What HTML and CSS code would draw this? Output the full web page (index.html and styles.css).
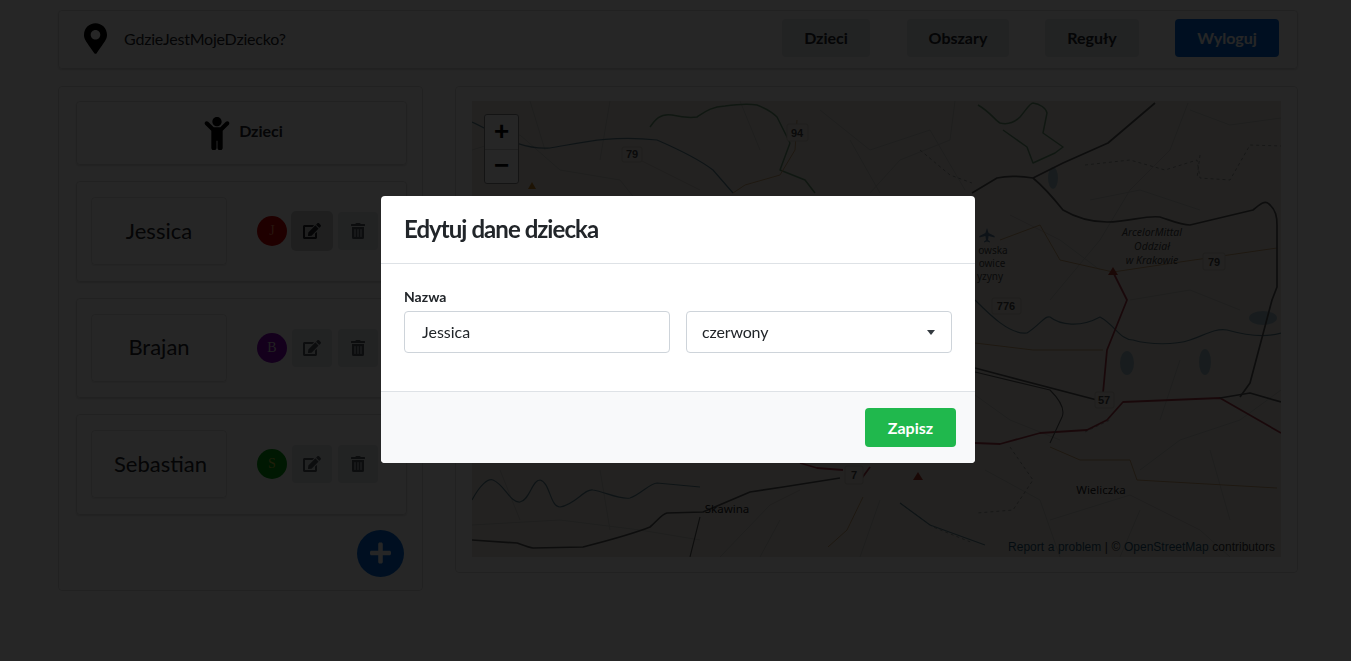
FILE: index.html
```html
<!DOCTYPE html>
<html lang="pl">
<head>
<meta charset="utf-8">
<title>GdzieJestMojeDziecko?</title>
<link rel="stylesheet" href="styles.css">
</head>
<body>
<div class="page">
  <header class="topbar">
    <div class="brand">
      <svg class="pin" viewBox="0 0 384 512"><path d="M172.268 501.67C26.97 291.031 0 268.413 0 192 0 85.961 85.961 0 192 0s192 85.961 192 192c0 76.413-26.97 99.031-172.268 309.67-9.535 13.774-29.93 13.773-39.464 0zM192 272c44.183 0 80-35.817 80-80s-35.817-80-80-80-80 35.817-80 80 35.817 80 80 80z"/></svg>
      <span class="brand-name">GdzieJestMojeDziecko?</span>
    </div>
    <nav class="nav">
      <a class="nav-btn nav-dzieci">Dzieci</a>
      <a class="nav-btn nav-obszary">Obszary</a>
      <a class="nav-btn nav-reguly">Reguły</a>
      <a class="nav-btn nav-primary">Wyloguj</a>
    </nav>
  </header>

  <main class="columns">
    <section class="panel">
      <div class="panel-title">
        <svg class="child" viewBox="0 0 384 512"><path d="M120 72c0-39.765 32.235-72 72-72s72 32.235 72 72c0 39.764-32.235 72-72 72s-72-32.236-72-72zm254.627 1.373c-12.496-12.497-32.758-12.497-45.254 0L242.745 160H141.254L54.627 73.373c-12.496-12.497-32.758-12.497-45.254 0-12.497 12.497-12.497 32.758 0 45.255L104 213.254V480c0 17.673 14.327 32 32 32h16c17.673 0 32-14.327 32-32V368h16v112c0 17.673 14.327 32 32 32h16c17.673 0 32-14.327 32-32V213.254l94.627-94.627c12.497-12.497 12.497-32.757 0-45.254z"/></svg>
        <span>Dzieci</span>
      </div>

      <article class="kid">
        <div class="kid-name">Jessica</div>
        <span class="avatar avatar-red">J</span>
        <button class="icon-btn icon-btn-focus"><svg class="ic-edit" viewBox="0 0 576 512"><path d="M402.6 83.2l90.2 90.2c3.8 3.8 3.8 10 0 13.8L274.4 405.6l-92.8 10.3c-12.4 1.4-22.9-9.1-21.5-21.5l10.3-92.8L388.8 83.2c3.8-3.8 10-3.8 13.8 0zm162-22.9l-48.8-48.8c-15.2-15.2-39.9-15.2-55.2 0l-35.4 35.4c-3.8 3.8-3.8 10 0 13.8l90.2 90.2c3.8 3.8 10 3.8 13.8 0l35.4-35.4c15.2-15.3 15.2-40 0-55.2zM384 346.2V448H64V128h229.8c3.2 0 6.2-1.3 8.5-3.5l40-40c7.6-7.6 2.2-20.5-8.5-20.5H48C21.5 64 0 85.5 0 112v352c0 26.5 21.5 48 48 48h352c26.5 0 48-21.5 48-48V306.2c0-10.7-12.9-16-20.5-8.5l-40 40c-2.2 2.3-3.5 5.3-3.5 8.5z"/></svg></button>
        <button class="icon-btn"><svg class="ic-trash" viewBox="0 0 448 512"><path d="M32 464a48 48 0 0 0 48 48h288a48 48 0 0 0 48-48V128H32zm272-256a16 16 0 0 1 32 0v224a16 16 0 0 1-32 0zm-96 0a16 16 0 0 1 32 0v224a16 16 0 0 1-32 0zm-96 0a16 16 0 0 1 32 0v224a16 16 0 0 1-32 0zM432 32H312l-9.4-18.7A24 24 0 0 0 281.1 0H166.8a23.72 23.72 0 0 0-21.4 13.3L136 32H16A16 16 0 0 0 0 48v32a16 16 0 0 0 16 16h416a16 16 0 0 0 16-16V48a16 16 0 0 0-16-16z"/></svg></button>
      </article>

      <article class="kid">
        <div class="kid-name">Brajan</div>
        <span class="avatar avatar-purple">B</span>
        <button class="icon-btn"><svg class="ic-edit" viewBox="0 0 576 512"><path d="M402.6 83.2l90.2 90.2c3.8 3.8 3.8 10 0 13.8L274.4 405.6l-92.8 10.3c-12.4 1.4-22.9-9.1-21.5-21.5l10.3-92.8L388.8 83.2c3.8-3.8 10-3.8 13.8 0zm162-22.9l-48.8-48.8c-15.2-15.2-39.9-15.2-55.2 0l-35.4 35.4c-3.8 3.8-3.8 10 0 13.8l90.2 90.2c3.8 3.8 10 3.8 13.8 0l35.4-35.4c15.2-15.3 15.2-40 0-55.2zM384 346.2V448H64V128h229.8c3.2 0 6.2-1.3 8.5-3.5l40-40c7.6-7.6 2.2-20.5-8.5-20.5H48C21.5 64 0 85.5 0 112v352c0 26.5 21.5 48 48 48h352c26.5 0 48-21.5 48-48V306.2c0-10.7-12.9-16-20.5-8.5l-40 40c-2.2 2.3-3.5 5.3-3.5 8.5z"/></svg></button>
        <button class="icon-btn"><svg class="ic-trash" viewBox="0 0 448 512"><path d="M32 464a48 48 0 0 0 48 48h288a48 48 0 0 0 48-48V128H32zm272-256a16 16 0 0 1 32 0v224a16 16 0 0 1-32 0zm-96 0a16 16 0 0 1 32 0v224a16 16 0 0 1-32 0zm-96 0a16 16 0 0 1 32 0v224a16 16 0 0 1-32 0zM432 32H312l-9.4-18.7A24 24 0 0 0 281.1 0H166.8a23.72 23.72 0 0 0-21.4 13.3L136 32H16A16 16 0 0 0 0 48v32a16 16 0 0 0 16 16h416a16 16 0 0 0 16-16V48a16 16 0 0 0-16-16z"/></svg></button>
      </article>

      <article class="kid">
        <div class="kid-name kid-name-long">Sebastian</div>
        <span class="avatar avatar-green">S</span>
        <button class="icon-btn"><svg class="ic-edit" viewBox="0 0 576 512"><path d="M402.6 83.2l90.2 90.2c3.8 3.8 3.8 10 0 13.8L274.4 405.6l-92.8 10.3c-12.4 1.4-22.9-9.1-21.5-21.5l10.3-92.8L388.8 83.2c3.8-3.8 10-3.8 13.8 0zm162-22.9l-48.8-48.8c-15.2-15.2-39.9-15.2-55.2 0l-35.4 35.4c-3.8 3.8-3.8 10 0 13.8l90.2 90.2c3.8 3.8 10 3.8 13.8 0l35.4-35.4c15.2-15.3 15.2-40 0-55.2zM384 346.2V448H64V128h229.8c3.2 0 6.2-1.3 8.5-3.5l40-40c7.6-7.6 2.2-20.5-8.5-20.5H48C21.5 64 0 85.5 0 112v352c0 26.5 21.5 48 48 48h352c26.5 0 48-21.5 48-48V306.2c0-10.7-12.9-16-20.5-8.5l-40 40c-2.2 2.3-3.5 5.3-3.5 8.5z"/></svg></button>
        <button class="icon-btn"><svg class="ic-trash" viewBox="0 0 448 512"><path d="M32 464a48 48 0 0 0 48 48h288a48 48 0 0 0 48-48V128H32zm272-256a16 16 0 0 1 32 0v224a16 16 0 0 1-32 0zm-96 0a16 16 0 0 1 32 0v224a16 16 0 0 1-32 0zm-96 0a16 16 0 0 1 32 0v224a16 16 0 0 1-32 0zM432 32H312l-9.4-18.7A24 24 0 0 0 281.1 0H166.8a23.72 23.72 0 0 0-21.4 13.3L136 32H16A16 16 0 0 0 0 48v32a16 16 0 0 0 16 16h416a16 16 0 0 0 16-16V48a16 16 0 0 0-16-16z"/></svg></button>
      </article>

      <div class="fab-row">
        <button class="fab"><svg class="ic-plus" viewBox="0 0 448 512"><path d="M416 208H272V64c0-17.67-14.33-32-32-32h-32c-17.67 0-32 14.33-32 32v144H32c-17.67 0-32 14.33-32 32v32c0 17.67 14.33 32 32 32h144v144c0 17.67 14.33 32 32 32h32c17.67 0 32-14.33 32-32V304h144c17.67 0 32-14.33 32-32v-32c0-17.67-14.33-32-32-32z"/></svg></button>
      </div>
    </section>

    <section class="map-card">
      <div class="map">
        <svg class="map-svg" viewBox="472 101 809 456">
          <g class="minor">
            <path d="M472 150L520 135L560 170L620 180L660 230"/>
            <path d="M530 101L545 150M610 101L600 160M640 160L700 190"/>
            <path d="M820 110L870 150L930 130L965 190"/>
            <path d="M955 101L950 140L900 160L870 193"/>
            <path d="M1188 103L1170 150L1130 190L1100 240L1050 300"/>
            <path d="M1190 110L1230 125L1281 118"/>
            <path d="M1010 215L1060 240L1100 270"/>
            <path d="M975 395L1010 420L1060 440"/>
            <path d="M1140 470L1180 440L1240 420L1281 390"/>
            <path d="M1050 520L1130 495L1200 530L1230 557"/>
            <path d="M472 525L560 520L640 530L700 540M720 557L770 505L800 490"/>
            <path d="M1180 360L1160 420M1210 450L1230 520"/>
            <path d="M740 101L760 150M850 140L880 193M1090 200L1140 190L1200 210M1130 300L1190 290L1240 310"/>
            <path d="M985 470L1040 500L1060 557M1140 510L1120 557M880 500L860 557M780 520L760 557M500 470L520 520M600 470L610 530"/>
          </g>
          <g class="dash">
            <path d="M920 150L950 175L972 183M1085 165L1130 160L1165 170L1197 160L1200 178L1230 180L1250 145L1281 146"/>
            <path d="M1010 447L1033 480L1013 510L977 513"/>
            <path d="M1085 432L1110 420M1200 155L1197 178"/>
            <path d="M900 503L933 527L973 543"/>
          </g>
          <g class="water">
            <path d="M472 122C500 135 520 150 550 148C580 143 610 135 657 140C680 150 700 160 713 170L733 193"/>
            <path d="M975 300C990 315 1010 335 1027 333C1040 325 1045 315 1050 317C1060 325 1080 328 1100 317C1115 325 1120 340 1133 340C1150 345 1175 345 1190 340C1205 335 1215 328 1227 330C1245 335 1265 338 1281 333"/>
            <path d="M472 500C480 485 488 478 493 480C505 485 510 503 520 502C530 500 532 480 540 480C550 482 550 507 560 507C575 505 585 488 593 490C605 492 620 500 630 498C640 495 650 483 657 483L700 487"/>
            <path d="M985 545L930 525L900 503"/>
            <ellipse cx="1053" cy="178" rx="5" ry="11"/>
            <ellipse cx="1127" cy="363" rx="7" ry="12"/>
            <ellipse cx="1205" cy="362" rx="6" ry="13"/>
            <ellipse cx="1263" cy="318" rx="14" ry="7"/>
          </g>
          <g class="green">
            <path d="M650 127C655 120 660 113 672 115C685 118 690 118 697 117C705 112 710 107 725 106C740 104 750 104 757 105C770 110 775 115 777 117L790 143"/>
            <path d="M978 105C990 112 995 120 1000 123C1008 125 1015 122 1020 117C1026 110 1030 103 1033 103C1040 104 1046 108 1047 113L1043 133L1063 147L1055 153L1033 163L1027 147L1003 130"/>
            <path d="M790 143L780 170L805 180L815 193"/>
          </g>
          <g class="orange">
            <path d="M797 120L795 150L780 175L745 185L733 193"/>
            <path d="M975 343L1033 350L1103 350"/>
            <path d="M1050 447L1080 460L1130 460L1137 480L1277 488"/>
            <path d="M863 497L847 530L828 547"/>
            <path d="M1000 240L1040 225L1060 260L1113 272L1180 262L1277 248"/>
          </g>
          <g class="red">
            <path d="M1113 272L1127 300L1107 350L1103 393"/>
            <path d="M1281 433L1220 398L1123 402L1107 420L1087 430L1040 433L1000 444L975 443"/>
            <path d="M800 463L817 468L843 470M870 467L862 478"/>
          </g>
          <g class="road">
            <path d="M1155 103L1108 143L1063 163L1033 178C1020 176 1005 176 997 178L972 193"/>
            <path d="M1033 178C1045 188 1055 200 1063 210C1080 220 1095 222 1107 222C1130 222 1145 215 1160 217C1170 220 1180 225 1190 225L1253 210C1260 204 1265 200 1269 204C1276 210 1277 217 1277 225L1277 287L1272 300L1250 383L1240 397"/>
            <path d="M1281 402L1250 393L1220 398"/>
            <path d="M975 368L1097 400"/>
            <path class="thin" d="M975 372L1050 390C1060 400 1065 410 1062 417L1050 443"/>
            <path d="M472 540L517 543C525 546 530 548 533 548L583 547C610 540 630 535 650 527C658 520 662 514 667 513L703 512L750 492L783 487L840 478"/>
            <path class="thin" d="M700 517L690 557"/>
          </g>
          <path class="tri-red" d="M918 472l5 8h-10zM1113 267l5 8h-10z"/>
          <path class="tri-orange" d="M532 182l4 7h-8z"/>
          <path class="plane" d="M987 228l1.600 5l6 3v1.500l-6-1.500l-.6 4l2 1.500v1l-3-1l-3 1v-1l2-1.500l-.6-4l-6 1.500v-1.500l6-3z"/>
          <g class="shield">
            <rect x="622" y="147" width="20" height="15" rx="2"/>
            <rect x="787" y="124" width="21" height="17" rx="2"/>
            <rect x="1203" y="253" width="22" height="17" rx="2"/>
            <rect x="992" y="298" width="29" height="16" rx="2"/>
            <rect x="1095" y="392" width="19" height="16" rx="2"/>
            <rect x="845" y="466" width="18" height="18" rx="2"/>
          </g>
          <g class="shield-text">
            <text x="632" y="158">79</text>
            <text x="797" y="137">94</text>
            <text x="1214" y="266">79</text>
            <text x="1006" y="310">776</text>
            <text x="1104" y="404">57</text>
            <text x="854" y="479">7</text>
          </g>
          <g class="label">
            <text x="1152" y="236" class="italic">ArcelorMittal</text>
            <text x="1152" y="250" class="italic">Oddział</text>
            <text x="1152" y="264" class="italic">w Krakowie</text>
            <text x="993" y="254">owska</text>
            <text x="992" y="267">owice</text>
            <text x="990" y="280">yzyny</text>
            <text x="1101" y="494" class="place">Wieliczka</text>
            <text x="727" y="513" class="place">Skawina</text>
          </g>
        </svg>
        <div class="zoom-ctl">
          <button class="zoom-btn">+</button>
          <button class="zoom-btn">−</button>
        </div>
        <div class="attrib"><span class="link">Report a problem</span> | © <span class="link">OpenStreetMap</span> contributors</div>
      </div>
    </section>
  </main>
</div>

<div class="overlay">
  <div class="modal">
    <div class="modal-head"><h2 class="modal-title">Edytuj dane dziecka</h2></div>
    <div class="modal-body">
      <label class="field-label">Nazwa</label>
      <div class="field-row">
        <input class="control input" type="text" value="Jessica">
        <div class="select-wrap">
          <select class="control select"><option>czerwony</option></select>
        </div>
      </div>
    </div>
    <div class="modal-foot"><button class="save">Zapisz</button></div>
  </div>
</div>
</body>
</html>
```

FILE: styles.css
```css
* { box-sizing: border-box; }
html, body { margin: 0; height: 100%; }
body {
  background: #fff;
  font-family: Lato, "Liberation Sans", sans-serif;
  color: #212529;
  overflow: hidden;
}
button { font-family: inherit; border: 0; padding: 0; }
.page { width: 1240px; margin-left: 58px; padding-top: 10px; }

.topbar {
  height: 59px;
  display: flex;
  align-items: center;
  justify-content: space-between;
  border: 1px solid rgba(0,0,0,.125);
  border-radius: 4px;
  box-shadow: 0 1px 2px rgba(0,0,0,.15);
  padding: 0 18px 2px 25px;
}
.brand { display: flex; align-items: center; gap: 17px; }
.pin { width: 23px; height: 31px; fill: #000; }
.brand-name { font-size: 16px; letter-spacing: -.2px; }
.nav { display: flex; margin-bottom: 2px; }
.nav-btn {
  height: 38px;
  display: flex;
  align-items: center;
  justify-content: center;
  border-radius: 4px;
  background: #e2e6ea;
  font-weight: 700;
  font-size: 16px;
  color: #212529;
}
.nav-dzieci { width: 88px; margin-right: 37px; }
.nav-obszary { width: 102px; margin-right: 36px; }
.nav-reguly { width: 94px; margin-right: 36px; }
.nav-primary { width: 104px; background: #0069d9; color: #fff; }

.columns { display: flex; gap: 32px; margin-top: 17px; align-items: flex-start; }
.panel {
  width: 365px;
  height: 505px;
  border: 1px solid rgba(0,0,0,.125);
  border-radius: 4px;
  padding: 14px 15px 0 17px;
  display: flex;
  flex-direction: column;
}
.panel-title {
  height: 64px;
  border: 1px solid rgba(0,0,0,.125);
  border-radius: 4px;
  display: flex;
  align-items: center;
  justify-content: center;
  gap: 9px;
  font-weight: 700;
  font-size: 16px;
  padding: 0 0 6px 4px;
  box-shadow: 0 1px 2px rgba(0,0,0,.15);
}
.child { width: 26px; height: 33px; fill: #000; margin-top: 6px; }

.kid {
  height: 100.5px;
  flex: none;
  margin-top: 16px;
  border: 1px solid rgba(0,0,0,.125);
  border-radius: 4px;
  padding-left: 14px;
  display: flex;
  align-items: center;
  box-shadow: 0 1px 2px rgba(0,0,0,.15);
}
.kid-name {
  width: 136px;
  height: 68px;
  margin-right: 30px;
  border: 1px solid rgba(0,0,0,.1);
  border-radius: 4px;
  box-shadow: 0 1px 1px rgba(0,0,0,.08);
  display: flex;
  align-items: center;
  justify-content: center;
  font-size: 22px;
  padding-bottom: 2px;
}
.kid-name-long { padding-left: 3px; }
.avatar {
  width: 30px;
  height: 30px;
  border-radius: 50%;
  margin-right: 5px;
  display: flex;
  align-items: center;
  justify-content: center;
  font-family: "Liberation Serif", serif;
  font-size: 14px;
}
.avatar-red { background: #d00000; color: #ff9060; }
.avatar-purple { background: #8500bb; color: #ddd; }
.avatar-green { background: #00a010; color: #c8c840; }
.icon-btn {
  width: 40px;
  height: 38px;
  margin-right: 6px;
  border-radius: 4px;
  background: #e2e6ea;
  display: flex;
  align-items: center;
  justify-content: center;
}
.icon-btn-focus { background: #cdd0d2; box-shadow: 0 0 0 1px #cdd0d2; }
.ic-edit { width: 18px; height: 16px; fill: #555b60; }
.icon-btn-focus .ic-edit { fill: #212529; }
.ic-trash { width: 14px; height: 16px; fill: #555b60; }
.fab-row { display: flex; justify-content: flex-end; padding-right: 3px; margin-top: 15px; }
.fab {
  width: 47px;
  height: 47px;
  border-radius: 50%;
  background: #0069d9;
  display: flex;
  align-items: center;
  justify-content: center;
}
.ic-plus { width: 21px; height: 24px; fill: #fff; }

.map-card {
  width: 843px;
  height: 487px;
  border: 1px solid rgba(0,0,0,.125);
  border-radius: 4px;
  padding: 14px 16px;
}
.map { position: relative; width: 809px; height: 456px; background: #e8e5df; overflow: hidden; }
.map-svg { display: block; width: 100%; height: 100%; }
.map-svg path { fill: none; stroke-linejoin: round; }
.minor path { stroke: #cdcbc5; stroke-width: 1; }
.dash path { stroke: #9a9a96; stroke-width: 1; stroke-dasharray: 3 3; }
.water path { stroke: #5f8390; stroke-width: 1.2; }
.water ellipse { fill: #a3bcc6; }
.green path { stroke: #6a9a75; stroke-width: 1.5; }
.orange path { stroke: #c8a070; stroke-width: 1; }
.red path { stroke: #a83a48; stroke-width: 1.8; }
.road path { stroke: #585858; stroke-width: 1.7; }
.road .thin { stroke-width: 1.1; }
.map-svg .tri-red { fill: #b03a2a; stroke: none; }
.map-svg .tri-orange { fill: #c08020; stroke: none; }
.map-svg .plane { fill: #5a7a9a; stroke: none; }
.shield rect { fill: #e8e5df; stroke: #cfcaba; }
.shield-text text { font-family: "Liberation Sans", sans-serif; font-size: 11px; font-weight: 700; fill: #444; text-anchor: middle; }
.label text { font-family: "Noto Sans", sans-serif; font-size: 10px; fill: #444; text-anchor: middle; }
.label .italic { font-style: italic; font-size: 10.500px; }
.label .place { font-size: 11.500px; fill: #222; }

.zoom-ctl {
  position: absolute;
  left: 12px;
  top: 13px;
  width: 35px;
  border: 1px solid #888;
  border-radius: 3px;
  display: flex;
  flex-direction: column;
  background: #fff;
}
.zoom-btn {
  height: 34px;
  background: transparent;
  font-family: "Liberation Sans", sans-serif;
  font-size: 26px;
  font-weight: 700;
  line-height: 28px;
  padding-bottom: 3px;
  color: #000;
}
.zoom-btn + .zoom-btn { border-top: 1px solid #ccc; }
.attrib {
  position: absolute;
  right: 6px;
  bottom: 3px;
  font-family: "Liberation Sans", sans-serif;
  font-size: 12px;
  word-spacing: .25px;
  line-height: 14px;
  color: #333;
}
.link { color: #1f5570; }

.overlay {
  position: fixed;
  inset: 0;
  padding: 196px 0 0 381px;
  background: rgba(0,0,0,.85);
}
.modal {
  width: 594px;
  height: 267px;
  background: #fff;
  border-radius: 4px;
  overflow: hidden;
  display: flex;
  flex-direction: column;
}
.modal-head { height: 68px; border-bottom: 1px solid #dee2e6; padding: 0 23px; display: flex; align-items: center; }
.modal-title { margin: 0; font-size: 24px; font-weight: 700; letter-spacing: -.95px; line-height: 1.2; padding-bottom: 1px; }
.modal-body { height: 127px; padding: 24px 23px 0; }
.field-label { display: block; font-size: 14px; font-weight: 700; line-height: 17px; margin-bottom: 6px; }
.field-row { display: flex; gap: 16px; width: 548px; }
.control {
  width: 266px;
  height: 42px;
  border: 1px solid #ced4da;
  border-radius: 4px;
  background: #fff;
  font-family: inherit;
  font-size: 16px;
  color: #212529;
  outline: 0;
}
.input { padding: 0 17px 2px; }
.select-wrap { position: relative; }
.select { appearance: none; -webkit-appearance: none; padding: 0 15px 2px; letter-spacing: -.15px; }
.select-wrap::after {
  content: "";
  position: absolute;
  left: 241px;
  top: 19px;
  border: 4.500px solid transparent;
  border-top: 5px solid #343a40;
  border-bottom: 0;
}
.modal-foot {
  flex: 1;
  background: #f8f9fa;
  border-top: 1px solid #dee2e6;
  padding: 16px 19px 0 0;
  display: flex;
  justify-content: flex-end;
  align-items: flex-start;
}
.save {
  width: 91px;
  height: 39px;
  border-radius: 4px;
  background: #20b84d;
  color: #fff;
  font-size: 16px;
  font-weight: 700;
}
```
